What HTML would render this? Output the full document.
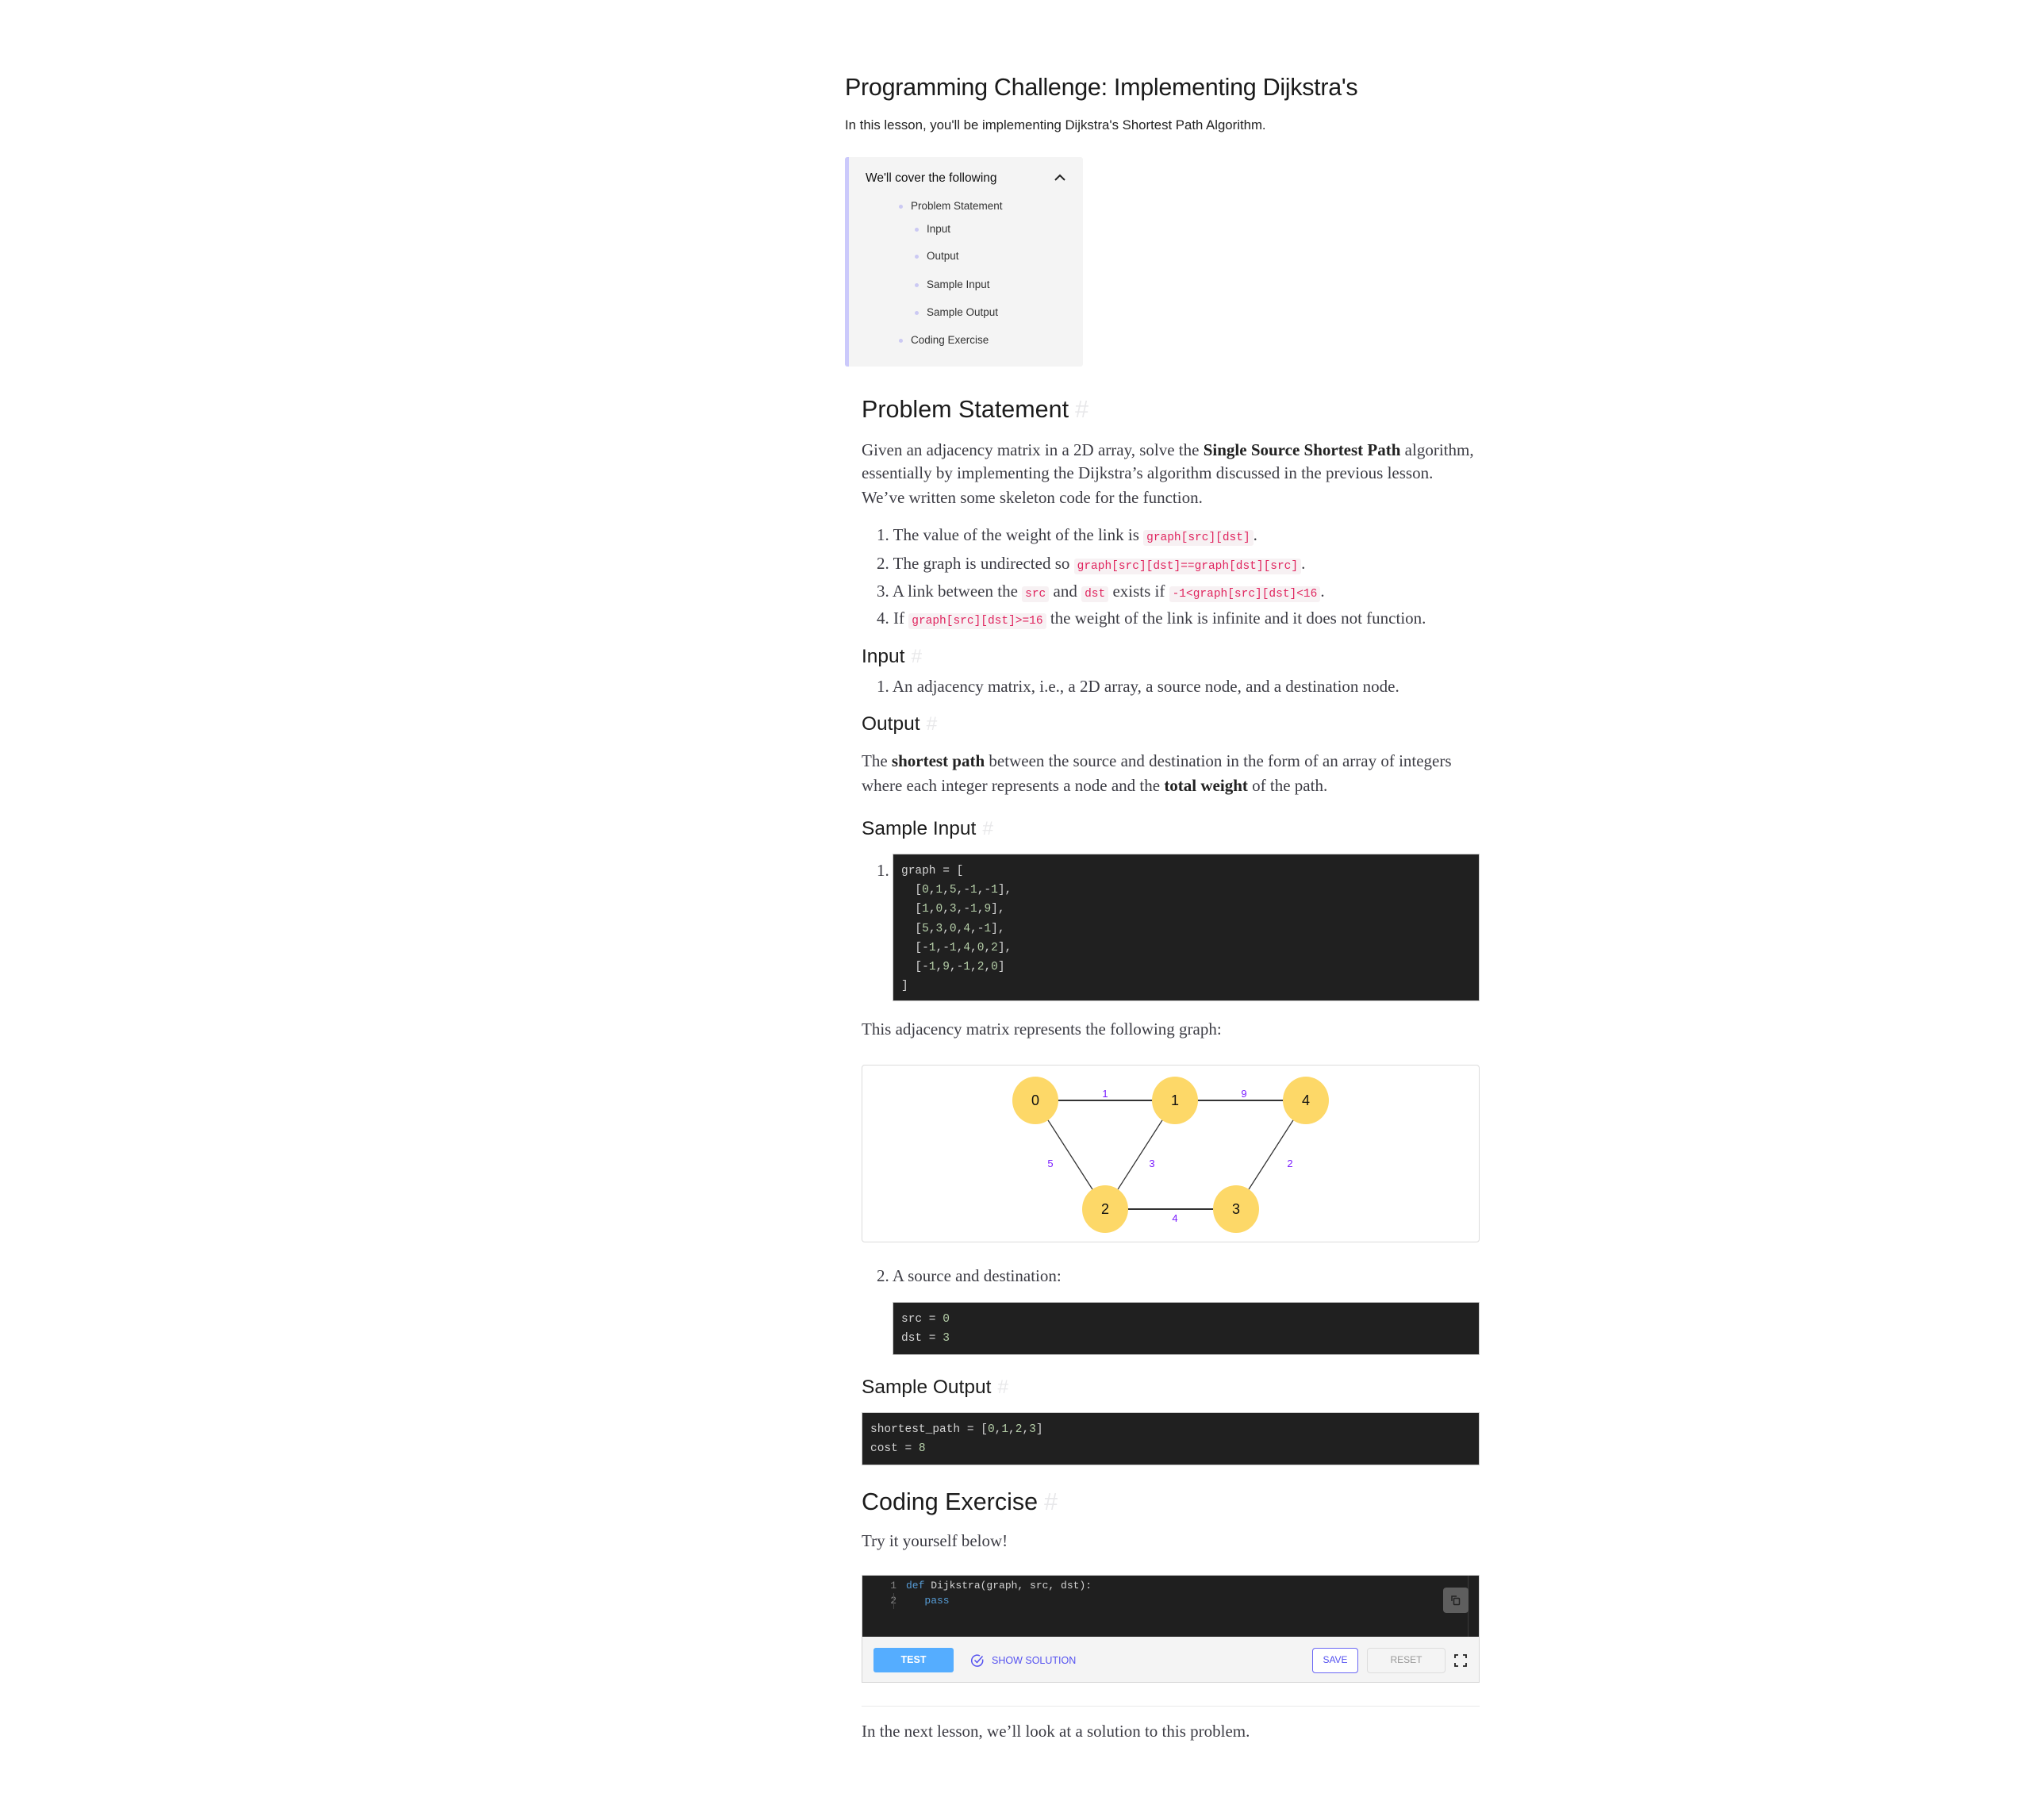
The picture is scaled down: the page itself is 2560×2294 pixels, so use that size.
<!DOCTYPE html>
<html><head><meta charset="utf-8">
<style>
*{margin:0;padding:0;box-sizing:border-box}
body{width:2560px;height:2294px;background:#fff;position:relative;overflow:hidden;font-family:"Liberation Sans",sans-serif;color:#222}
.a{position:absolute;white-space:nowrap}
.h{font-family:"Liberation Sans",sans-serif;color:#1b1b1b}
.h .x{color:#e8e8ea;margin-left:8px}
.s{font-family:"Liberation Serif",serif;font-size:21px;color:#3c3c44;line-height:30px}
.s b{color:#222}
.c{font-family:"Liberation Mono",monospace;font-size:14.5px;color:#e0245e;background:#f7f1f3;padding:2px 4px;border-radius:3px}
.code{position:absolute;background:#202020;border:1px solid #ccc;font-family:"Liberation Mono",monospace;font-size:14.5px;color:#d4d4d4;line-height:24.2px;white-space:pre;padding:10px}
.n{color:#b5cea8}
.toc{position:absolute;left:1065px;top:198px;width:300px;height:264px;background:#f4f4f4;border-left:5px solid #cbc9fb;border-radius:3px}
.ti{position:absolute;font-size:13.5px;color:#333;white-space:nowrap;line-height:20px}
.ti.b:before{content:"";position:absolute;left:-15px;top:8px;width:5px;height:5px;border-radius:50%;background:#cbc9f3}
</style></head><body>

<div class="a h" style="left:1065px;top:91px;font-size:30.5px;line-height:38px;letter-spacing:-0.3px">Programming Challenge: Implementing Dijkstra's</div>
<div class="a" style="left:1065px;top:147px;font-size:16.8px;line-height:22px;color:#222">In this lesson, you'll be implementing Dijkstra's Shortest Path Algorithm.</div>

<div class="toc">
  <div class="ti" style="left:21px;top:17px;font-size:15.5px;color:#111">We'll cover the following</div>
  <svg style="position:absolute;left:258px;top:20px" width="16" height="12" viewBox="0 0 16 12"><path d="M2 9 L8 3 L14 9" fill="none" stroke="#222" stroke-width="2"/></svg>
  <div class="ti b" style="left:78px;top:52px">Problem Statement</div>
  <div class="ti b" style="left:98px;top:81px">Input</div>
  <div class="ti b" style="left:98px;top:115px">Output</div>
  <div class="ti b" style="left:98px;top:151px">Sample Input</div>
  <div class="ti b" style="left:98px;top:186px">Sample Output</div>
  <div class="ti b" style="left:78px;top:221px">Coding Exercise</div>
</div>

<div class="a h" style="left:1086px;top:498px;font-size:30.5px;line-height:36px">Problem Statement<span class="x">#</span></div>
<div class="a s" style="left:1086px;top:552px">Given an adjacency matrix in a 2D array, solve the <b>Single Source Shortest Path</b> algorithm,</div>
<div class="a s" style="left:1086px;top:581px">essentially by implementing the Dijkstra’s algorithm discussed in the previous lesson.</div>
<div class="a s" style="left:1086px;top:612px">We’ve written some skeleton code for the function.</div>

<div class="a s" style="left:1105px;top:659px">1. The value of the weight of the link is <span class="c">graph[src][dst]</span>.</div>
<div class="a s" style="left:1105px;top:695px">2. The graph is undirected so <span class="c">graph[src][dst]==graph[dst][src]</span>.</div>
<div class="a s" style="left:1105px;top:730px">3. A link between the <span class="c">src</span> and <span class="c">dst</span> exists if <span class="c">-1&lt;graph[src][dst]&lt;16</span>.</div>
<div class="a s" style="left:1105px;top:764px">4. If <span class="c">graph[src][dst]&gt;=16</span> the weight of the link is infinite and it does not function.</div>

<div class="a h" style="left:1086px;top:813px;font-size:24.5px;line-height:30px">Input<span class="x">#</span></div>
<div class="a s" style="left:1105px;top:850px">1. An adjacency matrix, i.e., a 2D array, a source node, and a destination node.</div>

<div class="a h" style="left:1086px;top:898px;font-size:24.5px;line-height:30px">Output<span class="x">#</span></div>
<div class="a s" style="left:1086px;top:944px">The <b>shortest path</b> between the source and destination in the form of an array of integers</div>
<div class="a s" style="left:1086px;top:975px">where each integer represents a node and the <b>total weight</b> of the path.</div>

<div class="a h" style="left:1086px;top:1030px;font-size:24.5px;line-height:30px">Sample Input<span class="x">#</span></div>
<div class="a s" style="left:1105px;top:1082px">1.</div>
<div class="code" style="left:1125px;top:1076px;width:740px;height:186px;padding-top:9px">graph = [
  [<span class="n">0</span>,<span class="n">1</span>,<span class="n">5</span>,-<span class="n">1</span>,-<span class="n">1</span>],
  [<span class="n">1</span>,<span class="n">0</span>,<span class="n">3</span>,-<span class="n">1</span>,<span class="n">9</span>],
  [<span class="n">5</span>,<span class="n">3</span>,<span class="n">0</span>,<span class="n">4</span>,-<span class="n">1</span>],
  [-<span class="n">1</span>,-<span class="n">1</span>,<span class="n">4</span>,<span class="n">0</span>,<span class="n">2</span>],
  [-<span class="n">1</span>,<span class="n">9</span>,-<span class="n">1</span>,<span class="n">2</span>,<span class="n">0</span>]
]</div>

<div class="a s" style="left:1086px;top:1282px">This adjacency matrix represents the following graph:</div>

<div class="a" style="left:1086px;top:1342px;width:779px;height:224px;border:1.5px solid #dcdcdc;border-radius:4px"></div>
<svg class="a" style="left:0;top:0" width="2560" height="2294">
  <g stroke="#333" stroke-width="1.3">
    <line x1="1305" y1="1387" x2="1481" y2="1387" stroke-width="2"/>
    <line x1="1481" y1="1387" x2="1646" y2="1387" stroke-width="2"/>
    <line x1="1393" y1="1524" x2="1558" y2="1524" stroke-width="2"/>
    <line x1="1305" y1="1387" x2="1393" y2="1524"/>
    <line x1="1481" y1="1387" x2="1393" y2="1524"/>
    <line x1="1646" y1="1387" x2="1558" y2="1524"/>
  </g>
  <g fill="#fdd868">
    <ellipse cx="1305" cy="1387" rx="29" ry="30"/>
    <ellipse cx="1481" cy="1387" rx="29" ry="30"/>
    <ellipse cx="1646" cy="1387" rx="29" ry="30"/>
    <ellipse cx="1393" cy="1524" rx="29" ry="30"/>
    <ellipse cx="1558" cy="1524" rx="29" ry="30"/>
  </g>
  <g font-family="Liberation Sans, sans-serif" font-size="18" fill="#111" text-anchor="middle">
    <text x="1305" y="1393">0</text><text x="1481" y="1393">1</text><text x="1646" y="1393">4</text>
    <text x="1393" y="1530">2</text><text x="1558" y="1530">3</text>
  </g>
  <g font-family="Liberation Sans, sans-serif" font-size="13" fill="#7a1cff" text-anchor="middle">
    <text x="1393" y="1383">1</text><text x="1568" y="1383">9</text>
    <text x="1324" y="1471">5</text><text x="1452" y="1471">3</text><text x="1626" y="1471">2</text>
    <text x="1481" y="1540">4</text>
  </g>
</svg>

<div class="a s" style="left:1105px;top:1593px">2. A source and destination:</div>
<div class="code" style="left:1125px;top:1641px;width:740px;height:67px;padding-top:9px">src = <span class="n">0</span>
dst = <span class="n">3</span></div>

<div class="a h" style="left:1086px;top:1734px;font-size:24.5px;line-height:30px">Sample Output<span class="x">#</span></div>
<div class="code" style="left:1086px;top:1780px;width:779px;height:67px;padding-top:9px">shortest_path = [<span class="n">0</span>,<span class="n">1</span>,<span class="n">2</span>,<span class="n">3</span>]
cost = <span class="n">8</span></div>

<div class="a h" style="left:1086px;top:1875px;font-size:30.5px;line-height:36px">Coding Exercise<span class="x">#</span></div>
<div class="a s" style="left:1086px;top:1927px">Try it yourself below!</div>

<div class="a" style="left:1086px;top:1985px;width:779px;height:136px;border:1px solid #d6d6d6">
  <div style="position:absolute;left:0;top:0;width:777px;height:77px;background:#1f1f1f"></div>
  <div style="position:absolute;left:763px;top:0;width:1px;height:77px;background:#3a3a3a"></div>
  <div style="position:absolute;left:0;top:3px;width:43px;text-align:right;font-family:'Liberation Mono',monospace;font-size:13px;line-height:19px;color:#858585;white-space:pre">1
2</div>
  <div style="position:absolute;left:39px;top:22px;width:1px;height:20px;background:#444"></div>
  <div style="position:absolute;left:55px;top:3px;font-family:'Liberation Mono',monospace;font-size:13px;line-height:19px;color:#d4d4d4;white-space:pre"><span style="color:#569cd6">def</span> Dijkstra(graph, src, dst):
   <span style="color:#569cd6">pass</span></div>
  <div style="position:absolute;left:732px;top:15px;width:32px;height:32px;background:#5e5e5e;border-radius:4px">
    <svg width="32" height="32" viewBox="0 0 32 32"><path d="M11 17V11h6" fill="none" stroke="#222" stroke-width="1.5"/><rect x="13.5" y="13.5" width="7" height="8" rx="1" fill="none" stroke="#222" stroke-width="1.5"/></svg>
  </div>
  <div style="position:absolute;left:0;top:77px;width:777px;height:57px;background:#f4f4f4"></div>
  <div style="position:absolute;left:14px;top:91px;width:101px;height:31px;background:#55adff;border-radius:3px;color:#fff;font-size:12.5px;font-weight:bold;text-align:center;line-height:31px">TEST</div>
  <svg style="position:absolute;left:136px;top:98px" width="18" height="18" viewBox="0 0 18 18"><path d="M15.5 7.5A7 7 0 1 1 12 3" fill="none" stroke="#5552f0" stroke-width="1.5"/><path d="M5.5 8.5l3 3 7-8" fill="none" stroke="#5552f0" stroke-width="1.5"/></svg>
  <div style="position:absolute;left:163px;top:98px;font-size:12.5px;color:#5552f0;line-height:18px">SHOW SOLUTION</div>
  <div style="position:absolute;left:567px;top:91px;width:58px;height:32px;border:1.5px solid #6a67f4;border-radius:4px;background:#fff;color:#5552f0;font-size:12px;text-align:center;line-height:29px">SAVE</div>
  <div style="position:absolute;left:636px;top:91px;width:99px;height:32px;border:1.5px solid #ddd;border-radius:4px;color:#999;font-size:12px;text-align:center;line-height:29px">RESET</div>
  <svg style="position:absolute;left:746px;top:99px" width="16" height="16" viewBox="0 0 16 16"><path d="M1 5V1h4M11 1h4v4M15 11v4h-4M5 15H1v-4" fill="none" stroke="#222" stroke-width="1.8"/></svg>
</div>

<div class="a" style="left:1086px;top:2150px;width:779px;height:1px;background:#eaeaea"></div>
<div class="a s" style="left:1086px;top:2167px">In the next lesson, we’ll look at a solution to this problem.</div>

</body></html>
